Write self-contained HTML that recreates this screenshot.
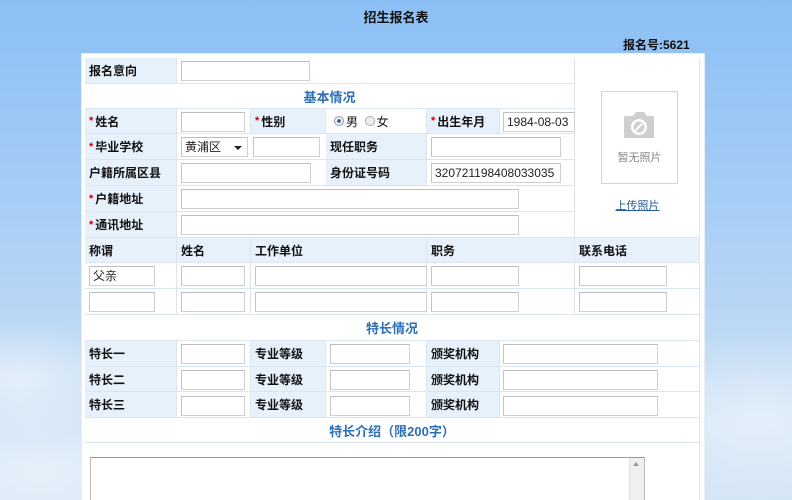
<!DOCTYPE html>
<html style="width:792px;height:500px;overflow:hidden"><head><meta charset="utf-8"><style>
*{margin:0;padding:0;box-sizing:border-box}
body{width:792px;height:500px;overflow:hidden;position:relative;font-family:"Liberation Sans","Noto Sans CJK SC","WenQuanYi Zen Hei",sans-serif;font-size:12px;color:#111;
background:radial-gradient(ellipse 120px 60px at 20px 380px,rgba(255,255,255,.55),transparent),radial-gradient(ellipse 200px 90px at 760px 420px,rgba(255,255,255,.5),transparent),radial-gradient(ellipse 150px 80px at 40px 470px,rgba(255,255,255,.5),transparent),linear-gradient(#8cbff5 0%,#a6cdf5 40%,#c4dcf4 75%,#d2e4f5 100%)}
.a{position:absolute}
.box{left:81px;top:53px;width:624px;height:447px;background:#fff;border:1px solid #e6eef6;border-bottom:0}
.c{position:absolute;border-right:1px solid #dbe5ef;border-bottom:1px solid #dbe5ef;background:#fff;display:flex;align-items:center;padding-left:4px;font-weight:bold;font-size:12px}
.l{background:#e6f1fc}
.h{justify-content:center;color:#2a6fb8;font-size:13px;padding:0}
.r{color:#c00;font-size:11px;margin-right:2px}
.i{position:absolute;height:20px;background:#fff;border:1px solid #cfcfcf;border-top-color:#bdbdbd;border-left-color:#c4c4c4;font-size:12px;font-weight:normal;padding-left:3px;line-height:18px;color:#222}
</style></head><body>
<div class="a" style="left:0;width:792px;top:7px;text-align:center;font-weight:bold;font-size:13px">招生报名表</div>
<div class="a" style="left:623px;top:36px;font-weight:bold;font-size:12px">报名号:5621</div>
<div class="a box"></div>

<div class="c l" style="left:85px;top:58px;width:92px;height:26px">报名意向</div>
<div class="c" style="left:177px;top:58px;width:398px;height:26px"></div>
<div class="i" style="left:181px;top:61px;width:129px"></div>
<div class="c h" style="left:85px;top:84px;width:490px;height:25px">基本情况</div>
<div class="c" style="left:575px;top:58px;width:125px;height:180px"></div>
<div class="a" style="left:601px;top:91px;width:77px;height:93px;border:1px solid #d4d4d4;background:#fff"></div>
<svg class="a" style="left:623px;top:108px" width="34" height="34" viewBox="0 0 34 34"><path d="M3 8h7l3-4h8l3 4h5a2 2 0 0 1 2 2v20H3a2 2 0 0 1-2-2V10a2 2 0 0 1 2-2z" fill="#cfcfcf"/><circle cx="16" cy="19" r="8" fill="#fff"/><circle cx="16" cy="19" r="5.5" fill="#cfcfcf"/><path d="M12.5 22.5l7-7" stroke="#fff" stroke-width="2"/></svg>
<div class="a" style="left:601px;top:149px;width:77px;text-align:center;color:#888;font-size:11px">暂无照片</div>
<div class="a" style="left:575px;top:197px;width:125px;text-align:center;color:#2a5d9c;font-size:11px;text-decoration:underline">上传照片</div>

<div class="c l" style="left:85px;top:109px;width:92px;height:25px"><span class="r">*</span>姓名</div>
<div class="c" style="left:177px;top:109px;width:74px;height:25px"></div>
<div class="i" style="left:181px;top:112px;width:64px"></div>
<div class="c l" style="left:251px;top:109px;width:75px;height:25px"><span class="r">*</span>性别</div>
<div class="c" style="left:326px;top:109px;width:101px;height:25px;font-weight:normal;padding-left:8px"><span style="display:inline-block;width:10px;height:10px;border-radius:50%;border:1px solid #999;background:radial-gradient(#2a5d9c 30%,#eee 35%);margin-right:2px"></span>男&nbsp;&nbsp;<span style="display:inline-block;width:10px;height:10px;border-radius:50%;border:1px solid #aaa;background:#eee;margin-right:2px"></span>女</div>
<div class="c l" style="left:427px;top:109px;width:73px;height:25px"><span class="r">*</span>出生年月</div>
<div class="c" style="left:500px;top:109px;width:75px;height:25px"></div>
<div class="i" style="left:503px;top:112px;width:72px">1984-08-03</div>

<div class="c l" style="left:85px;top:134px;width:92px;height:26px"><span class="r">*</span>毕业学校</div>
<div class="c" style="left:177px;top:134px;width:398px;height:26px"></div>
<div class="i" style="left:181px;top:137px;width:67px">黄浦区<span style="position:absolute;right:5px;top:8px;border:4px solid transparent;border-top:4px solid #222;border-bottom:0"></span></div>
<div class="i" style="left:253px;top:137px;width:67px"></div>
<div class="c l" style="left:326px;top:134px;width:101px;height:26px">现任职务</div>
<div class="i" style="left:431px;top:137px;width:130px"></div>

<div class="c l" style="left:85px;top:160px;width:92px;height:26px">户籍所属区县</div>
<div class="c" style="left:177px;top:160px;width:398px;height:26px"></div>
<div class="i" style="left:181px;top:163px;width:130px"></div>
<div class="c l" style="left:326px;top:160px;width:101px;height:26px">身份证号码</div>
<div class="i" style="left:431px;top:163px;width:130px">320721198408033035</div>

<div class="c l" style="left:85px;top:186px;width:92px;height:26px"><span class="r">*</span>户籍地址</div>
<div class="c" style="left:177px;top:186px;width:398px;height:26px"></div>
<div class="i" style="left:181px;top:189px;width:338px"></div>
<div class="c l" style="left:85px;top:212px;width:92px;height:26px"><span class="r">*</span>通讯地址</div>
<div class="c" style="left:177px;top:212px;width:398px;height:26px"></div>
<div class="i" style="left:181px;top:215px;width:338px"></div>

<div class="c l" style="left:85px;top:238px;width:92px;height:25px">称谓</div>
<div class="c l" style="left:177px;top:238px;width:74px;height:25px">姓名</div>
<div class="c l" style="left:251px;top:238px;width:176px;height:25px">工作单位</div>
<div class="c l" style="left:427px;top:238px;width:148px;height:25px">职务</div>
<div class="c l" style="left:575px;top:238px;width:125px;height:25px">联系电话</div>
<div class="c" style="left:85px;top:263px;width:92px;height:26px"></div>
<div class="c" style="left:177px;top:263px;width:74px;height:26px"></div>
<div class="c" style="left:251px;top:263px;width:176px;height:26px"></div>
<div class="c" style="left:427px;top:263px;width:148px;height:26px"></div>
<div class="c" style="left:575px;top:263px;width:125px;height:26px"></div>
<div class="c" style="left:85px;top:289px;width:92px;height:26px"></div>
<div class="c" style="left:177px;top:289px;width:74px;height:26px"></div>
<div class="c" style="left:251px;top:289px;width:176px;height:26px"></div>
<div class="c" style="left:427px;top:289px;width:148px;height:26px"></div>
<div class="c" style="left:575px;top:289px;width:125px;height:26px"></div>
<div class="i" style="left:89px;top:266px;width:66px">父亲</div>
<div class="i" style="left:181px;top:266px;width:64px"></div>
<div class="i" style="left:255px;top:266px;width:172px"></div>
<div class="i" style="left:431px;top:266px;width:88px"></div>
<div class="i" style="left:579px;top:266px;width:88px"></div>
<div class="i" style="left:89px;top:292px;width:66px"></div>
<div class="i" style="left:181px;top:292px;width:64px"></div>
<div class="i" style="left:255px;top:292px;width:172px"></div>
<div class="i" style="left:431px;top:292px;width:88px"></div>
<div class="i" style="left:579px;top:292px;width:88px"></div>

<div class="c h" style="left:85px;top:315px;width:615px;height:26px">特长情况</div>

<div class="c l" style="left:85px;top:341px;width:92px;height:26px">特长一</div>
<div class="c" style="left:177px;top:341px;width:74px;height:26px"></div>
<div class="c l" style="left:251px;top:341px;width:75px;height:26px">专业等级</div>
<div class="c" style="left:326px;top:341px;width:101px;height:26px"></div>
<div class="c l" style="left:427px;top:341px;width:73px;height:26px">颁奖机构</div>
<div class="c" style="left:500px;top:341px;width:200px;height:26px"></div>
<div class="c l" style="left:85px;top:367px;width:92px;height:25px">特长二</div>
<div class="c" style="left:177px;top:367px;width:74px;height:25px"></div>
<div class="c l" style="left:251px;top:367px;width:75px;height:25px">专业等级</div>
<div class="c" style="left:326px;top:367px;width:101px;height:25px"></div>
<div class="c l" style="left:427px;top:367px;width:73px;height:25px">颁奖机构</div>
<div class="c" style="left:500px;top:367px;width:200px;height:25px"></div>
<div class="c l" style="left:85px;top:392px;width:92px;height:26px">特长三</div>
<div class="c" style="left:177px;top:392px;width:74px;height:26px"></div>
<div class="c l" style="left:251px;top:392px;width:75px;height:26px">专业等级</div>
<div class="c" style="left:326px;top:392px;width:101px;height:26px"></div>
<div class="c l" style="left:427px;top:392px;width:73px;height:26px">颁奖机构</div>
<div class="c" style="left:500px;top:392px;width:200px;height:26px"></div>
<div class="i" style="left:181px;top:344px;width:64px"></div>
<div class="i" style="left:330px;top:344px;width:80px"></div>
<div class="i" style="left:503px;top:344px;width:155px"></div>
<div class="i" style="left:181px;top:370px;width:64px"></div>
<div class="i" style="left:330px;top:370px;width:80px"></div>
<div class="i" style="left:503px;top:370px;width:155px"></div>
<div class="i" style="left:181px;top:396px;width:64px"></div>
<div class="i" style="left:330px;top:396px;width:80px"></div>
<div class="i" style="left:503px;top:396px;width:155px"></div>

<div class="c h" style="left:85px;top:418px;width:615px;height:25px">特长介绍（限200字）</div>
<div class="a" style="left:85px;top:443px;width:615px;height:57px;background:#fff;border-right:1px solid #dbe5ef"></div>
<div class="a" style="left:90px;top:457px;width:555px;height:43px;border:1px solid #bbb;border-top-color:#999;border-bottom:0;background:#fff"></div>
<div class="a" style="left:629px;top:458px;width:15px;height:42px;background:#f0f0f0;border-left:1px solid #e0e0e0"></div>
<div class="a" style="left:633px;top:462px;border:3px solid transparent;border-bottom:4px solid #999;border-top:0"></div>
</body></html>
